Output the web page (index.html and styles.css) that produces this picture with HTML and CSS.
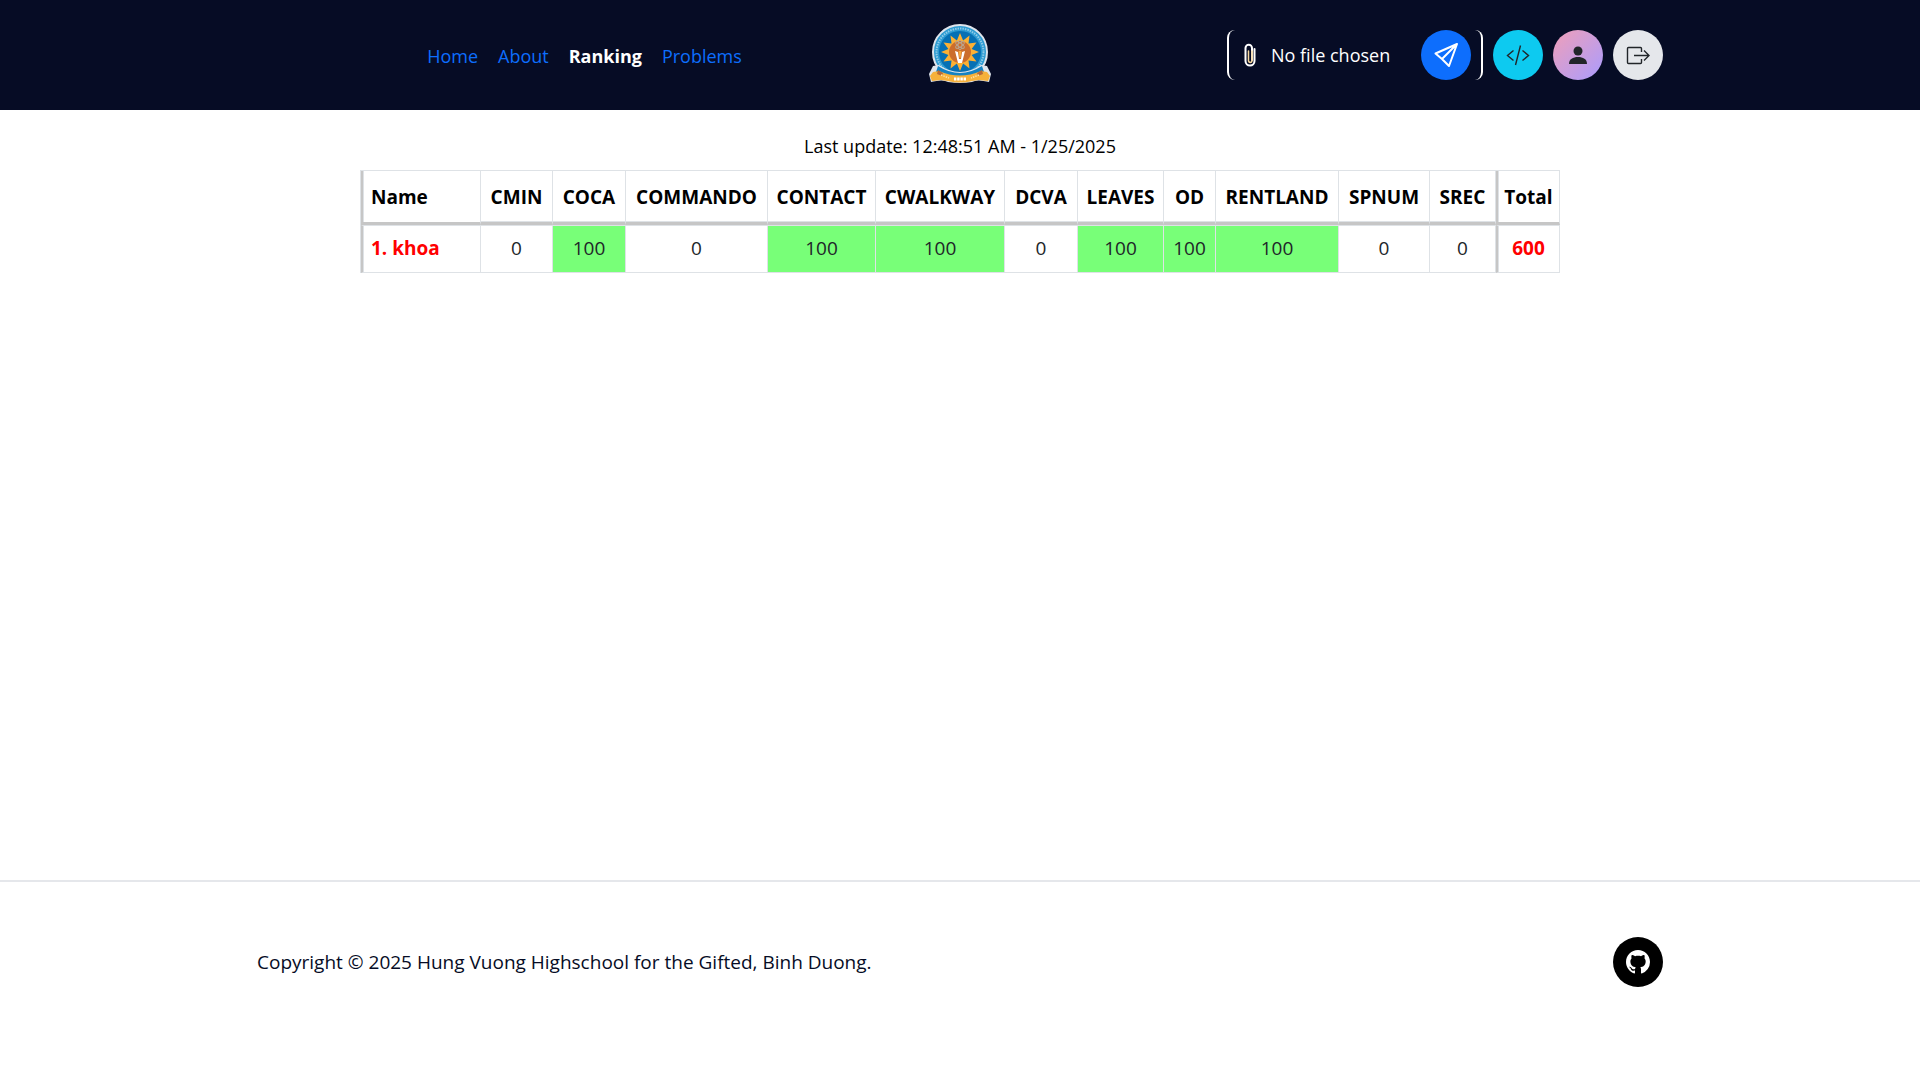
FILE: index.html
```html
<!DOCTYPE html>
<html lang="en">
<head>
<meta charset="utf-8">
<meta name="viewport" content="width=device-width, initial-scale=1">
<title>Ranking</title>
<link rel="stylesheet" href="styles.css">
</head>
<body>
<header class="site-header">
  <div class="container header-grid">
    <nav class="nav" aria-label="Main">
      <a href="#home">Home</a>
      <a href="#about">About</a>
      <a href="#ranking" class="active" aria-current="page">Ranking</a>
      <a href="#problems">Problems</a>
    </nav>
    <a href="#home" class="logo" aria-label="Hung Vuong Highschool">
      <svg width="64" height="64" viewBox="0 0 64 64">
        <circle cx="32" cy="29" r="27" fill="#2d9bd2" stroke="#dfe5ec" stroke-width="2"/>
        <circle cx="32" cy="29" r="23.500" fill="none" stroke="#8fcbe8" stroke-width="2" stroke-dasharray="1.500 1"/>
        <circle cx="32" cy="29" r="21" fill="#0670b4"/>
        <path d="M32 10l3.100 7.400 6.400-4.900-1 8 8-1-4.900 6.400L51 29l-7.400 3.100 4.900 6.400-8-1 1 8-6.400-4.900L32 48l-3.100-7.400-6.400 4.900 1-8-8 1 4.900-6.400L13 29l7.400-3.100-4.900-6.400 8 1-1-8 6.400 4.900z" fill="#fbb034"/>
        <circle cx="32" cy="29" r="11" fill="#cb6d2c"/>
        <g fill="none" stroke="#b9a58f"><ellipse cx="32" cy="22" rx="5" ry="2" transform="rotate(35 32 22)"/><ellipse cx="32" cy="22" rx="5" ry="2" transform="rotate(-35 32 22)"/><ellipse cx="32" cy="22" rx="2" ry="5"/></g>
        <path d="M27 28l3 12h4l3-12-3 1-1 7h-2l-1-7z" fill="#fff"/><path d="M30.500 28h3l-1 7h-1z" fill="#f7a93a"/>
        <path d="M5 43l6-1q21 14 42 0l6 1 4 8-2 8q-12-3-17 0-12 2-24 0-5-3-17 0l-2-8z" fill="#dfe5ec"/>
        <path d="M10 43q22 14 44 0l2 6q-24 12-48 0z" fill="#1583c3"/>
        <path d="M5 49l6-1q21 9 42 0l6 1 3 4-2 5-9-1-7 1q-12 3-24 0l-7-1-9 1-2-5z" fill="#f6b13b"/>
        <path d="M10 47l5 3-1 3-5-2zM54 47l-5 3 1 3 5-2z" fill="#b86a38"/>
        <path d="M13 52l8 3M51 52l-8 3" stroke="#fde3a5" stroke-width="1.500" stroke-dasharray="1.500 1"/>
        <path d="M26 56h12" stroke="#fff" stroke-width="3" stroke-dasharray="2.400 .8"/>
      </svg>
    </a>
    <div class="actions">
      <form class="upload">
        <label class="file">
          <input type="file" class="visually-hidden">
          <svg width="14" height="24" viewBox="0 0 14 24" fill="none" stroke-linecap="round"><path d="M11.500 6v12a4.500 4.500 0 0 1-9 0V5a3 3 0 0 1 6.500 0v12" stroke="#fff" stroke-width="2"/><path d="M9 8v10a1.800 1.800 0 0 1-3.500 0V8" stroke="#f8d9a0" stroke-width="1.500"/></svg>
          <span>No file chosen</span>
        </label>
        <button type="submit" class="round send" aria-label="Submit">
          <svg width="50" height="50" viewBox="-25 -25 50 50"><path d="M11-11L-10.500-1.500-4 4 3 11zM11-11L-4 4"/></svg>
        </button>
      </form>
      <button type="button" class="round code" aria-label="Code editor">
        <svg width="50" height="50" viewBox="-25 -25 50 50"><path d="M-4.500-4.500l-6 5 6 5M4.500-4.500l6 5-6 5M2.500-9.500l-5 19.500"/></svg>
      </button>
      <button type="button" class="round user" aria-label="Profile">
        <svg width="50" height="50" viewBox="-25 -25 50 50"><circle cx="0" cy="-4" r="4.500"/><path d="M-9 9C-9 4-5 2 0 2S9 4 9 9z"/></svg>
      </button>
      <button type="button" class="round logout" aria-label="Log out">
        <svg width="50" height="50" viewBox="-25 -25 50 50"><path d="M3.500-3v-3.500q0-1-1-1h-12q-1 0-1 1v14q0 1 1 1h12q1 0 1-1V4M-4 .5H11M6-4.500l5 5-5 5"/></svg>
      </button>
    </div>
  </div>
</header>
<main class="main">
  <p class="updated">Last update: 12:48:51 AM - 1/25/2025</p>
  <table class="ranking">
    <colgroup>
      <col style="width:120px"><col style="width:72px"><col style="width:73px"><col style="width:142px"><col style="width:108px"><col style="width:129px"><col style="width:73px"><col style="width:86px"><col style="width:52px"><col style="width:123px"><col style="width:91px"><col style="width:66px"><col style="width:64px">
    </colgroup>
    <thead>
      <tr><th scope="col" class="name">Name</th><th scope="col">CMIN</th><th scope="col">COCA</th><th scope="col">COMMANDO</th><th scope="col">CONTACT</th><th scope="col">CWALKWAY</th><th scope="col">DCVA</th><th scope="col">LEAVES</th><th scope="col">OD</th><th scope="col">RENTLAND</th><th scope="col">SPNUM</th><th scope="col">SREC</th><th scope="col" class="total">Total</th></tr>
    </thead>
    <tbody>
      <tr><th scope="row" class="name">1. khoa</th><td>0</td><td class="full">100</td><td>0</td><td class="full">100</td><td class="full">100</td><td>0</td><td class="full">100</td><td class="full">100</td><td class="full">100</td><td>0</td><td>0</td><td class="total">600</td></tr>
    </tbody>
  </table>
</main>
<footer class="site-footer">
  <div class="container footer-row">
    <p>Copyright © 2025 Hung Vuong Highschool for the Gifted, Binh Duong.</p>
    <a href="#github" class="round github" aria-label="GitHub">
      <svg width="24" height="24" viewBox="0 0 16 16"><path d="M8 0C3.580 0 0 3.580 0 8c0 3.540 2.290 6.530 5.470 7.590.4.070.55-.17.55-.38 0-.19-.01-.82-.01-1.490-2.010.37-2.530-.49-2.690-.94-.09-.23-.48-.94-.82-1.130-.28-.15-.68-.52-.01-.53.63-.01 1.080.58 1.230.82.72 1.210 1.870.87 2.330.66.07-.52.28-.87.51-1.070-1.780-.2-3.640-.89-3.640-3.950 0-.87.31-1.590.82-2.150-.08-.2-.36-1.020.08-2.120 0 0 .67-.21 2.200.82.64-.18 1.320-.27 2-.27s1.360.09 2 .27c1.530-1.040 2.200-.82 2.200-.82.44 1.100.16 1.920.08 2.120.51.56.82 1.270.82 2.150 0 3.070-1.870 3.750-3.650 3.950.29.25.54.73.54 1.480 0 1.070-.01 1.930-.01 2.200 0 .21.15.46.55.38A8.010 8.010 0 0 0 16 8c0-4.420-3.580-8-8-8z"/></svg>
    </a>
  </div>
</footer>
</body>
</html>
```
FILE: styles.css
```css
* { box-sizing: border-box; }
body {
  margin: 0;
  min-height: 100vh;
  display: flex;
  flex-direction: column;
  font: 400 19px/30px "Open Sans", "Noto Sans", sans-serif;
  color: #000;
  background: #fff;
}
p { margin: 0; }
.container { width: 100%; max-width: 1406px; margin: 0 auto; }
.site-header { background: #060c25; padding: 23px 16px; font-size: 18px; }
.header-grid {
  display: grid;
  grid-template-columns: 1fr auto 1fr;
  align-items: center;
  gap: 16px;
}
.nav { display: flex; justify-content: center; gap: 20px; padding-top: 2px; }
.nav a { color: #0d6efd; text-decoration: none; font-weight: 500; }
.nav .active { color: #fff; font-weight: 700; }
.logo, .logo svg { display: block; }
.actions { display: flex; justify-content: flex-end; gap: 10px; }
.upload {
  display: flex;
  justify-content: space-between;
  width: 256px;
  padding: 0 10px 0 14px;
  border: solid #fff;
  border-width: 0 2px;
  border-radius: 8px;
  color: #fff;
}
.file { display: flex; align-items: center; gap: 14px; cursor: pointer; }
.visually-hidden {
  position: absolute;
  width: 1px;
  height: 1px;
  overflow: hidden;
  opacity: 0;
}
.round {
  display: flex;
  flex-shrink: 0;
  align-items: center;
  justify-content: center;
  width: 50px;
  height: 50px;
  padding: 0;
  border: 0;
  border-radius: 50%;
  color: #212529;
  cursor: pointer;
}
.round path { fill: none; stroke: currentColor; stroke-width: 1.4; }
.send { background: #0d6efd; color: #fff; }
.send path { stroke-width: 2; stroke-linejoin: round; }
.code { background: #0dcaf0; }
.user { background: linear-gradient(135deg, #f09fb8, #a99cff); }
.user path, .user circle { fill: #212529; stroke: none; }
.logout { background: #e5e7eb; }
.github { background: #000; }
.github path { fill: #fff; stroke: none; }
.main { flex: 1; padding: 21px 16px; }
.updated { text-align: center; font-size: 18px; font-weight: 500; }
.ranking {
  width: 100%;
  max-width: 1200px;
  margin: 9px auto 0;
  table-layout: fixed;
  border-collapse: separate;
  border-spacing: 0;
  border: solid #dee2e6;
  border-width: 1px 0 0 1px;
  white-space: nowrap;
}
.ranking th, .ranking td {
  padding: 7px 0 9px;
  border-right: 1px solid #dee2e6;
  border-bottom: 1px solid #dee2e6;
  text-align: center;
}
.ranking td { color: #212529; }
.ranking th { font-weight: 700; }
.ranking thead th {
  padding: 11px 0 10px;
  border-bottom: 3px solid #c6c6c6;
  box-shadow: inset 0 -1px #dee2e6;
}
.ranking tbody th, .ranking tbody td { border-top: 1px solid #dee2e6; }
.ranking .name, .ranking thead .name {
  padding-left: 8px;
  border-left: 2px solid #c6c6c6;
  text-align: left;
}
.ranking .total { border-left: 2px solid #c6c6c6; }
.ranking .name, .ranking .total { box-shadow: inset 1px 0 #dee2e6; }
.ranking tbody .name, .ranking tbody .total { color: #f00; font-weight: 700; }
.ranking .full { background: #78ff78; }
.site-footer { border-top: 2px solid #e5e7eb; padding: 55px 16px 93px; color: #060c25; }
.footer-row { display: flex; align-items: center; justify-content: space-between; gap: 16px; }
```
